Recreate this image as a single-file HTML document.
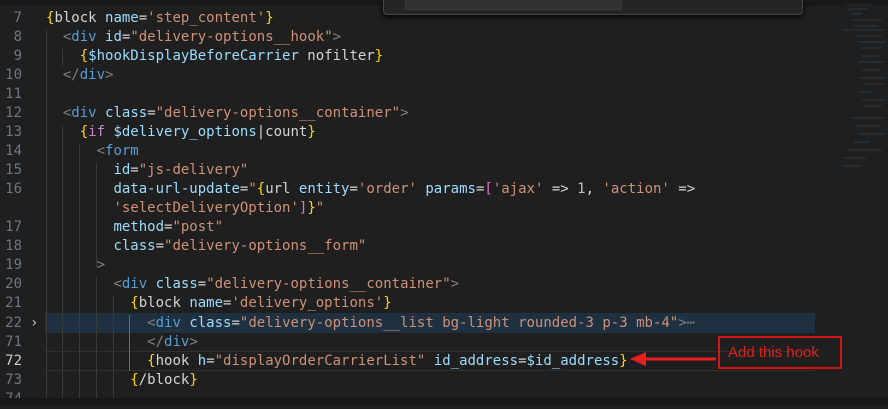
<!DOCTYPE html>
<html><head><meta charset="utf-8"><style>
html,body{margin:0;padding:0;width:888px;height:406px;overflow:hidden;background:#1f1f1f;}
.ed{position:absolute;left:0;top:0;width:888px;height:406px;font-family:"DejaVu Sans Mono","Liberation Mono",monospace;font-size:14px;color:#d4d4d4;}
.r{position:absolute;left:0;height:19px;line-height:19px;white-space:pre;width:820px;}
.n{position:absolute;left:0;width:22px;text-align:right;color:#6e7681;}
.c{position:absolute;left:46px;}
.t{color:#808080}.a{color:#9cdcfe}.s{color:#ce9178}.y{color:#ffd700}.p{color:#da70d6}.k{color:#c586c0}.w{color:#d4d4d4}.g{color:#b5cea8}.b{color:#569cd6}
.guide{position:absolute;width:1px;background:#3a3a3a;}
</style></head><body><div class="ed">
<div style="position:absolute;left:0;top:0;width:888px;height:6px;background:#181818"></div>
<div style="position:absolute;left:383px;top:0;width:418px;height:14px;background:#252526;border:1px solid #454545;border-top:none;border-radius:0 0 4px 4px;box-shadow:0 2px 6px #000"></div>
<div style="position:absolute;left:405px;top:0;width:215px;height:9px;background:#313131;border:1px solid #3c3c3c;border-top:none"></div>
<div style="position:absolute;left:45px;top:313px;width:770px;height:20px;background:#1f3040"></div>
<div style="position:absolute;left:45px;top:351px;width:770px;height:18px;border-top:1px solid #303030;border-bottom:1px solid #303030"></div>
<div class="guide" style="left:46px;top:30px;height:368px"></div>
<div class="guide" style="left:62px;top:49px;height:18px"></div>
<div class="guide" style="left:62px;top:125px;height:273px"></div>
<div class="guide" style="left:79px;top:144px;height:254px"></div>
<div class="guide" style="left:96px;top:163px;height:104px"></div>
<div class="guide" style="left:96px;top:277px;height:121px"></div>
<div class="guide" style="left:113px;top:296px;height:102px"></div>
<div class="guide" style="left:129px;top:315px;height:56px;background:#6b6b6b"></div>

<div class="r" style="top:9px"><span class="n">7</span><span class="c"><span class="y">{</span>block <span class="a">name</span>=<span class="s">'step_content'</span><span class="y">}</span></span></div>
<div class="r" style="top:28px"><span class="n">8</span><span class="c">  <span class="t">&lt;</span><span class="b">div</span> <span class="a">id</span>=<span class="s">"delivery-options__hook"</span><span class="t">&gt;</span></span></div>
<div class="r" style="top:47px"><span class="n">9</span><span class="c">    <span class="y">{</span><span class="a">$hookDisplayBeforeCarrier</span> nofilter<span class="y">}</span></span></div>
<div class="r" style="top:66px"><span class="n">10</span><span class="c">  <span class="t">&lt;/</span><span class="b">div</span><span class="t">&gt;</span></span></div>
<div class="r" style="top:85px"><span class="n">11</span></div>
<div class="r" style="top:104px"><span class="n">12</span><span class="c">  <span class="t">&lt;</span><span class="b">div</span> <span class="a">class</span>=<span class="s">"delivery-options__container"</span><span class="t">&gt;</span></span></div>
<div class="r" style="top:123px"><span class="n">13</span><span class="c">    <span class="y">{</span><span class="k">if</span> <span class="a">$delivery_options</span>|count<span class="y">}</span></span></div>
<div class="r" style="top:142px"><span class="n">14</span><span class="c">      <span class="t">&lt;</span><span class="b">form</span></span></div>
<div class="r" style="top:161px"><span class="n">15</span><span class="c">        <span class="a">id</span>=<span class="s">"js-delivery"</span></span></div>
<div class="r" style="top:180px"><span class="n">16</span><span class="c">        <span class="a">data-url-update</span>=<span class="s">"</span><span class="y">{</span>url <span class="a">entity</span>=<span class="s">'order'</span> <span class="a">params</span>=<span class="p">[</span><span class="s">'ajax'</span> =&gt; <span class="g">1</span>, <span class="s">'action'</span> =&gt;</span></div>
<div class="r" style="top:199px"><span class="c">        <span class="s">'selectDeliveryOption'</span><span class="p">]</span><span class="y">}</span><span class="s">"</span></span></div>
<div class="r" style="top:218px"><span class="n">17</span><span class="c">        <span class="a">method</span>=<span class="s">"post"</span></span></div>
<div class="r" style="top:237px"><span class="n">18</span><span class="c">        <span class="a">class</span>=<span class="s">"delivery-options__form"</span></span></div>
<div class="r" style="top:256px"><span class="n">19</span><span class="c">      <span class="t">&gt;</span></span></div>
<div class="r" style="top:275px"><span class="n">20</span><span class="c">        <span class="t">&lt;</span><span class="b">div</span> <span class="a">class</span>=<span class="s">"delivery-options__container"</span><span class="t">&gt;</span></span></div>
<div class="r" style="top:294px"><span class="n">21</span><span class="c">          <span class="y">{</span>block <span class="a">name</span>=<span class="s">'delivery_options'</span><span class="y">}</span></span></div>
<div class="r" style="top:314px"><span class="n">22</span><span style="position:absolute;left:30px;color:#c5c5c5">›</span><span class="c">            <span class="t">&lt;</span><span class="b">div</span> <span class="a">class</span>=<span class="s">"delivery-options__list bg-light rounded-3 p-3 mb-4"</span><span class="t">&gt;</span><span class="t">⋯</span></span></div>
<div class="r" style="top:333px"><span class="n">71</span><span class="c">            <span class="t">&lt;/</span><span class="b">div</span><span class="t">&gt;</span></span></div>
<div class="r" style="top:352px"><span class="n" style="color:#cccccc">72</span><span class="c">            <span class="y">{</span>hook <span class="a">h</span>=<span class="s">"displayOrderCarrierList"</span> <span class="a">id_address</span>=<span class="a">$id_address</span><span class="y">}</span></span></div>
<div class="r" style="top:371px"><span class="n">73</span><span class="c">          <span class="y">{</span>/block<span class="y">}</span></span></div>
<div class="r" style="top:390px"><span class="n">74</span></div>
<div style="position:absolute;left:0;top:398px;width:888px;height:8px;background:#181818"></div>

<svg style="position:absolute;left:628px;top:349px" width="90" height="20"><line x1="14" y1="10" x2="88" y2="10" stroke="#e51e1e" stroke-width="3"/><polygon points="2,10 18,3 18,17" fill="#e51e1e"/></svg>
<div style="position:absolute;left:718px;top:336px;width:124px;height:33px;border:2px solid #d0161a;box-sizing:border-box;color:#e51e1e;font-family:'Liberation Sans',sans-serif;font-size:15px;line-height:29px;padding-left:8px">Add this hook</div>

<svg style="position:absolute;left:822px;top:0" width="66" height="180">
<g stroke="#3f6685" stroke-width="0.6" opacity="0.7">
<line x1="24" y1="5" x2="50" y2="5"/><line x1="26" y1="9" x2="46" y2="9"/><line x1="30" y1="14" x2="40" y2="14"/><line x1="30" y1="20" x2="60" y2="20"/><line x1="32" y1="26" x2="56" y2="26"/><line x1="20" y1="30" x2="62" y2="30"/><line x1="34" y1="36" x2="60" y2="36"/><line x1="36" y1="42" x2="64" y2="42"/><line x1="38" y1="48" x2="60" y2="48"/><line x1="40" y1="56" x2="56" y2="56"/><line x1="36" y1="62" x2="62" y2="62"/><line x1="40" y1="70" x2="58" y2="70"/><line x1="38" y1="78" x2="64" y2="78"/><line x1="42" y1="84" x2="62" y2="84"/><line x1="38" y1="92" x2="50" y2="92"/><line x1="40" y1="100" x2="64" y2="100"/><line x1="42" y1="106" x2="60" y2="106"/><line x1="30" y1="118" x2="62" y2="118"/><line x1="34" y1="126" x2="58" y2="126"/><line x1="36" y1="134" x2="64" y2="134"/><line x1="32" y1="142" x2="48" y2="142"/><line x1="26" y1="150" x2="60" y2="150"/><line x1="22" y1="158" x2="44" y2="158"/><line x1="20" y1="166" x2="40" y2="166"/>
</g></svg>
</div></body></html>
